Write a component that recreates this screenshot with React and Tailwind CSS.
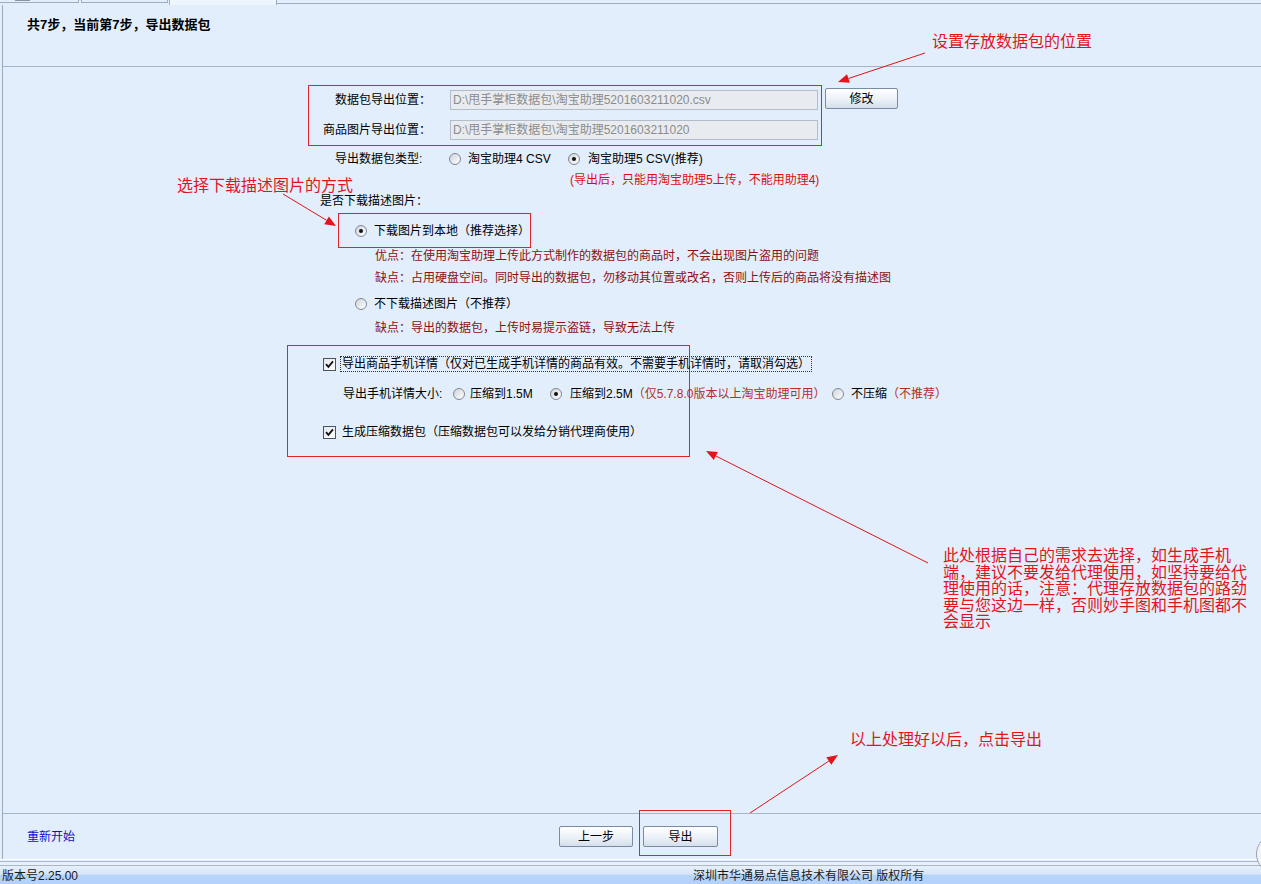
import React from "react";

const RED = "#e3141b";
const BOX = "border border-solid border-[#e0242c]";

function Arrow({ x1, y1, x2, y2 }) {
  const dx = x2 - x1, dy = y2 - y1;
  const L = Math.hypot(dx, dy);
  const ux = dx / L, uy = dy / L;
  const bx = x2 - ux * 11, by = y2 - uy * 11;
  const px = -uy * 4.5, py = ux * 4.5;
  return (
    <g>
      <line x1={x1} y1={y1} x2={bx} y2={by} stroke={RED} strokeWidth="1" />
      <polygon points={`${x2},${y2} ${bx + px},${by + py} ${bx - px},${by - py}`} fill={RED} />
    </g>
  );
}

function Radio({ checked }) {
  return (
    <span className="inline-flex w-[12px] h-[12px] shrink-0 rounded-full border border-[#7d8898] bg-gradient-to-br from-[#cfd4da] to-[#ffffff] items-center justify-center">
      {checked && <span className="w-[4px] h-[4px] rounded-full bg-[#111111]" />}
    </span>
  );
}

function Check() {
  return (
    <span className="inline-flex w-[13px] h-[13px] shrink-0 border border-[#4a5563] bg-gradient-to-br from-[#e4e7eb] to-[#ffffff] items-center justify-center">
      <svg width="9" height="9" viewBox="0 0 9 9">
        <path d="M1 4.2 L3.4 6.8 L8 1.4" stroke="#111" strokeWidth="1.8" fill="none" />
      </svg>
    </span>
  );
}

function Btn({ children, className }) {
  return (
    <div
      className={
        "h-[21px] shrink-0 flex items-center justify-center rounded-[2px] border border-[#7b8ba1] bg-gradient-to-b from-[#ffffff] via-[#eef3f9] to-[#d5dfeb] text-[12px] text-black " +
        className
      }
    >
      {children}
    </div>
  );
}

function PathRow({ label, value }) {
  return (
    <div className="flex items-center h-[20px]">
      <div className="w-[122px] shrink-0 text-right whitespace-nowrap">{label}</div>
      <div className="ml-[19px] w-[368px] shrink-0 h-[20px] border border-[#b3bdca] bg-[#e8ebef] flex items-center pl-[2px] text-[#8c8c8c] whitespace-nowrap overflow-hidden">
        {value}
      </div>
    </div>
  );
}

export default function App() {
  return (
    <div className="relative w-[1261px] h-[884px] overflow-hidden bg-[#e2eefb] flex flex-col font-['Liberation_Sans','Noto_Sans_CJK_SC',sans-serif] text-[12px] leading-[16px] text-black">
      {/* tabs */}
      <div className="h-[5px] flex shrink-0">
        <div className="w-[79px] shrink-0 h-[3px] border-b border-r border-[#a0adbf] flex">
          <div className="ml-[15px] w-[15px] h-[1px] bg-[#8b929c]" />
        </div>
        <div className="ml-[2px] w-[87px] shrink-0 h-[3px] border-b border-l border-r border-[#a0adbf]" />
        <div className="ml-[1px] w-[108px] shrink-0 h-[5px] border-l border-r border-[#a0adbf] bg-[#eef5fd]" />
        <div className="flex-1 h-[4px] border-b border-[#a0adbf]" />
      </div>

      {/* panel */}
      <div className="ml-[2px] flex-1 flex flex-col border-l border-[#9aa8bb]">
        {/* header */}
        <div className="h-[62px] shrink-0 border-b border-[#a7b5c8] pl-[24px] pt-[12px]">
          <div className="font-bold whitespace-nowrap text-[13px]">共7步，当前第7步，导出数据包</div>
        </div>

        {/* form */}
        <div className="flex-1 flex flex-col items-start">
          <div className="flex items-start mt-[18px] ml-[305px]">
            <div className={"w-[514px] h-[61px] shrink-0 flex flex-col pt-[4px] gap-[10px] " + BOX}>
              <PathRow label="数据包导出位置：" value="D:\甩手掌柜数据包\淘宝助理5201603211020.csv" />
              <PathRow label="商品图片导出位置：" value="D:\甩手掌柜数据包\淘宝助理5201603211020" />
            </div>
            <Btn className="ml-[3px] mt-[3px] w-[73px]">修改</Btn>
          </div>

          <div className="mt-[5px] ml-[332px] h-[16px] flex items-center whitespace-nowrap">
            <div className="w-[114px] shrink-0">导出数据包类型:</div>
            <div className="w-[119px] shrink-0 flex items-center">
              <Radio />
              <span className="ml-[7px]">淘宝助理4 CSV</span>
            </div>
            <div className="flex items-center">
              <Radio checked />
              <span className="ml-[8px]">淘宝助理5 CSV(推荐)</span>
            </div>
          </div>

          <div className="mt-[5px] ml-[567px] h-[16px] whitespace-nowrap text-[#d80f0f]">
            (导出后，只能用淘宝助理5上传，不能用助理4)
          </div>

          <div className="mt-[5px] ml-[317px] h-[16px] whitespace-nowrap">是否下载描述图片：</div>

          <div className={"mt-[4px] ml-[335px] w-[193px] h-[35px] flex items-center pl-[16px] whitespace-nowrap " + BOX}>
            <Radio checked />
            <span className="ml-[7px]">下载图片到本地（推荐选择）</span>
          </div>

          <div className="ml-[372px] h-[16px] whitespace-nowrap text-[#8c1010]">
            优点：在使用淘宝助理上传此方式制作的数据包的商品时，不会出现图片盗用的问题
          </div>
          <div className="mt-[6px] ml-[372px] h-[16px] whitespace-nowrap text-[#8c1010]">
            缺点：占用硬盘空间。同时导出的数据包，勿移动其位置或改名，否则上传后的商品将没有描述图
          </div>

          <div className="mt-[10px] ml-[352px] h-[16px] flex items-center whitespace-nowrap">
            <Radio />
            <span className="ml-[7px]">不下载描述图片（不推荐）</span>
          </div>
          <div className="mt-[8px] ml-[372px] h-[16px] whitespace-nowrap text-[#8c1010]">
            缺点：导出的数据包，上传时易提示盗链，导致无法上传
          </div>

          <div className={"mt-[9px] ml-[284px] w-[403px] h-[112px] flex flex-col pt-[10px] whitespace-nowrap " + BOX}>
            <div className="pl-[35px] h-[16px] flex items-center">
              <Check />
              <span className="ml-[4px] px-[1px] border border-dotted border-[#333] leading-[14px]">
                导出商品手机详情（仅对已生成手机详情的商品有效。不需要手机详情时，请取消勾选）
              </span>
            </div>
            <div className="mt-[14px] pl-[55px] h-[16px] flex items-center">
              <div className="w-[110px] shrink-0">导出手机详情大小:</div>
              <div className="w-[97px] shrink-0 flex items-center">
                <Radio />
                <span className="ml-[5px]">压缩到1.5M</span>
              </div>
              <div className="w-[282px] shrink-0 flex items-center">
                <Radio checked />
                <span className="ml-[8px]">压缩到2.5M</span>
                <span className="text-[#b42f2b]">（仅5.7.8.0版本以上淘宝助理可用）</span>
              </div>
              <div className="shrink-0 flex items-center">
                <Radio />
                <span className="ml-[7px]">不压缩</span>
                <span className="text-[#b42f2b]">（不推荐）</span>
              </div>
            </div>
            <div className="mt-[22px] pl-[35px] h-[16px] flex items-center">
              <Check />
              <span className="ml-[6px]">生成压缩数据包（压缩数据包可以发给分销代理商使用）</span>
            </div>
          </div>
        </div>

        {/* footer */}
        <div className="h-[46px] shrink-0 border-t border-[#a7b5c8] flex items-start pt-[12px]">
          <div className="w-[556px] shrink-0 pl-[24px] h-[21px] flex items-center text-[#1010c8] whitespace-nowrap">重新开始</div>
          <Btn className="w-[74px]">上一步</Btn>
          <Btn className="ml-[10px] w-[75px]">导出</Btn>
        </div>
      </div>

      {/* panel bottom edge */}
      <div className="h-[1px] shrink-0 bg-white" />
      <div className="h-[1px] shrink-0 bg-[#e2eefb]" />
      <div className="h-[1px] shrink-0 bg-[#a9b7c9]" />
      <div className="h-[3px] shrink-0 bg-[#e8f0fa]" />
      <div className="h-[1px] shrink-0 bg-[#a9b7c9]" />

      {/* status bar */}
      <div className="h-[18px] shrink-0 flex items-center bg-[linear-gradient(to_bottom,#e7f0fb_0%,#d6e5f9_45%,#b7d5fb_52%,#b2d1fb_100%)] text-[12px] text-[#1a1a1a] whitespace-nowrap">
        <div className="w-[693px] shrink-0 pl-[2px] pt-[1px]">版本号2.25.00</div>
        <div className="pt-[1px]">深圳市华通易点信息技术有限公司 版权所有</div>
      </div>

      {/* overlays: annotations */}
      <svg className="absolute left-0 top-0 pointer-events-none" width="1261" height="884">
        <Arrow x1={925} y1={53} x2={838} y2={82} />
        <Arrow x1={283} y1={194} x2={336} y2={226} />
        <Arrow x1={928} y1={563} x2={706} y2={451} />
        <Arrow x1={750} y1={813} x2={838} y2={755} />
      </svg>

      <div className={"absolute left-[639px] top-[810px] w-[92px] h-[46px] pointer-events-none " + BOX} />

      <div className="absolute left-[932px] top-[34px] text-[16px] leading-[16px] text-[#e3141b] whitespace-nowrap">
        设置存放数据包的位置
      </div>
      <div className="absolute left-[177px] top-[178px] text-[16px] leading-[16px] text-[#e3141b] whitespace-nowrap">
        选择下载描述图片的方式
      </div>
      <div className="absolute left-[943px] top-[548px] text-[16px] leading-[16.5px] text-[#e3141b] whitespace-nowrap">
        <div>此处根据自己的需求去选择，如生成手机</div>
        <div>端，建议不要发给代理使用，如坚持要给代</div>
        <div>理使用的话，注意：代理存放数据包的路劲</div>
        <div>要与您这边一样，否则妙手图和手机图都不</div>
        <div>会显示</div>
      </div>
      <div className="absolute left-[850px] top-[732px] text-[16px] leading-[16px] text-[#e3141b] whitespace-nowrap">
        以上处理好以后，点击导出
      </div>

      <div className="absolute left-[1256px] top-[834px] w-[40px] h-[40px] rounded-full border border-[#9aa3ae] bg-[#f2f5f8]" />
    </div>
  );
}
